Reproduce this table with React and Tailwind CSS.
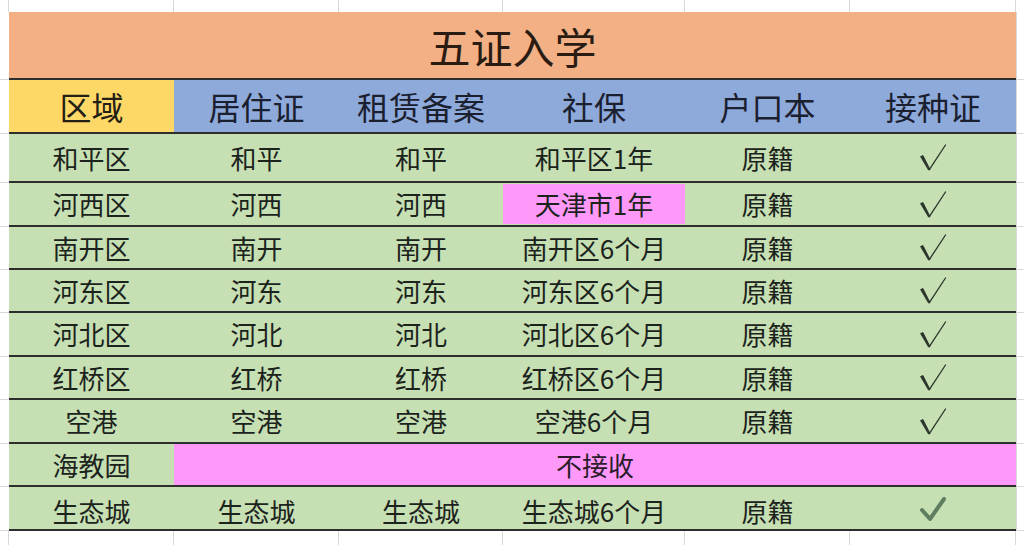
import React from "react";

const COLS = ["w-[165px]", "w-[165px]", "w-[164px]", "w-[182px]", "w-[165px]", "w-[166px]"];

function GridStrip({ h }) {
  return (
    <div className={`flex ${h}`}>
      <div className="w-[9px] border-r border-[#d9d9d9]" />
      {COLS.map((c, i) => (
        <div key={i} className={`${c} border-r border-[#d9d9d9]`} />
      ))}
      <div className="flex-1" />
    </div>
  );
}

function Row({ h, children }) {
  return (
    <div className={`flex ${h}`}>
      <div className="w-[9px] border-b border-[#d9d9d9]" />
      <div className="w-[1007px] flex border-b-2 border-[#2e2e2e]">{children}</div>
      <div className="flex-1 border-b border-[#d9d9d9] border-l border-l-[#d9d9d9]" />
    </div>
  );
}

function Cell({ w, bg = "", children, inner }) {
  return (
    <div className={`${w} ${bg} flex items-center justify-center`}>
      {inner ? (
        <div className={`w-full h-[40px] ${inner} flex items-center justify-center`}>{children}</div>
      ) : (
        children
      )}
    </div>
  );
}

function Radical() {
  return (
    <svg width="28" height="28" viewBox="0 0 28 28" className="mt-[1px]">
      <path d="M1.5 12.5 L4 11.5 L11 25.5 L9.5 26 Z" fill="#2a332a" stroke="#2a332a" strokeWidth="0.8" strokeLinejoin="round" />
      <path d="M10.3 25.6 L26.5 1" fill="none" stroke="#2a332a" strokeWidth="1.3" strokeLinecap="round" />
    </svg>
  );
}

const data = [
  { h: "h-[49px]", c: ["和平区", "和平", "和平", "和平区1年", "原籍"] },
  { h: "h-[44px]", c: ["河西区", "河西", "河西", "天津市1年", "原籍"], pink: true },
  { h: "h-[43px]", c: ["南开区", "南开", "南开", "南开区6个月", "原籍"] },
  { h: "h-[43px]", c: ["河东区", "河东", "河东", "河东区6个月", "原籍"] },
  { h: "h-[44px]", c: ["河北区", "河北", "河北", "河北区6个月", "原籍"] },
  { h: "h-[43px]", c: ["红桥区", "红桥", "红桥", "红桥区6个月", "原籍"] },
  { h: "h-[44px]", c: ["空港", "空港", "空港", "空港6个月", "原籍"] },
];

export default function App() {
  return (
    <div className="w-[1024px] h-[545px] bg-white flex flex-col overflow-hidden font-['Noto_Sans_CJK_SC','Noto_Sans',sans-serif] leading-none">
      <GridStrip h="h-[12px]" />
      {/* Title */}
      <Row h="h-[68px]">
        <div className="flex-1 bg-[#f3b084] flex items-center justify-center text-[42px] text-[#2a1c12] pt-[2px]">
          五证入学
        </div>
      </Row>
      {/* Header */}
      <Row h="h-[54px]">
        <Cell w={COLS[0]} bg="bg-[#fed866]">
          <span className="text-[32px] text-[#222015]">区域</span>
        </Cell>
        {["居住证", "租赁备案", "社保", "户口本", "接种证"].map((t, i) => (
          <Cell key={t} w={COLS[i + 1]} bg="bg-[#8eaadb]">
            <span className="text-[32px] text-[#1b2030]">{t}</span>
          </Cell>
        ))}
      </Row>
      {data.map((r, ri) => (
        <Row key={ri} h={r.h}>
          {r.c.map((t, i) => (
            <Cell
              key={i}
              w={COLS[i]}
              bg="bg-[#c6e0b4]"
              inner={r.pink && i === 3 ? "bg-[#fe99f9]" : undefined}
            >
              <span className="text-[26px] text-[#1c231c]">{t}</span>
            </Cell>
          ))}
          <Cell w={COLS[5]} bg="bg-[#c6e0b4]">
            <Radical />
          </Cell>
        </Row>
      ))}
      {/* 海教园 */}
      <Row h="h-[43px]">
        <Cell w={COLS[0]} bg="bg-[#c6e0b4]">
          <span className="text-[26px] text-[#1c231c]">海教园</span>
        </Cell>
        <div className="flex-1 bg-[#fe99f9] flex items-center justify-center">
          <span className="text-[26px] text-[#2a1c2a]">不接收</span>
        </div>
      </Row>
      {/* 生态城 */}
      <Row h="h-[44px]">
        {["生态城", "生态城", "生态城", "生态城6个月", "原籍"].map((t, i) => (
          <Cell key={i} w={COLS[i]} bg="bg-[#c6e0b4]">
            <span className="text-[26px] text-[#1c231c] pt-[6px]">{t}</span>
          </Cell>
        ))}
        <Cell w={COLS[5]} bg="bg-[#c6e0b4]">
          <svg width="28" height="28" viewBox="0 0 28 28" className="mt-[2px]">
            <polyline
              points="3,15 11,24 25,4"
              fill="none"
              stroke="#5f7d5f"
              strokeWidth="4"
              strokeLinecap="round"
              strokeLinejoin="round"
            />
          </svg>
        </Cell>
      </Row>
      <GridStrip h="flex-1" />
    </div>
  );
}
